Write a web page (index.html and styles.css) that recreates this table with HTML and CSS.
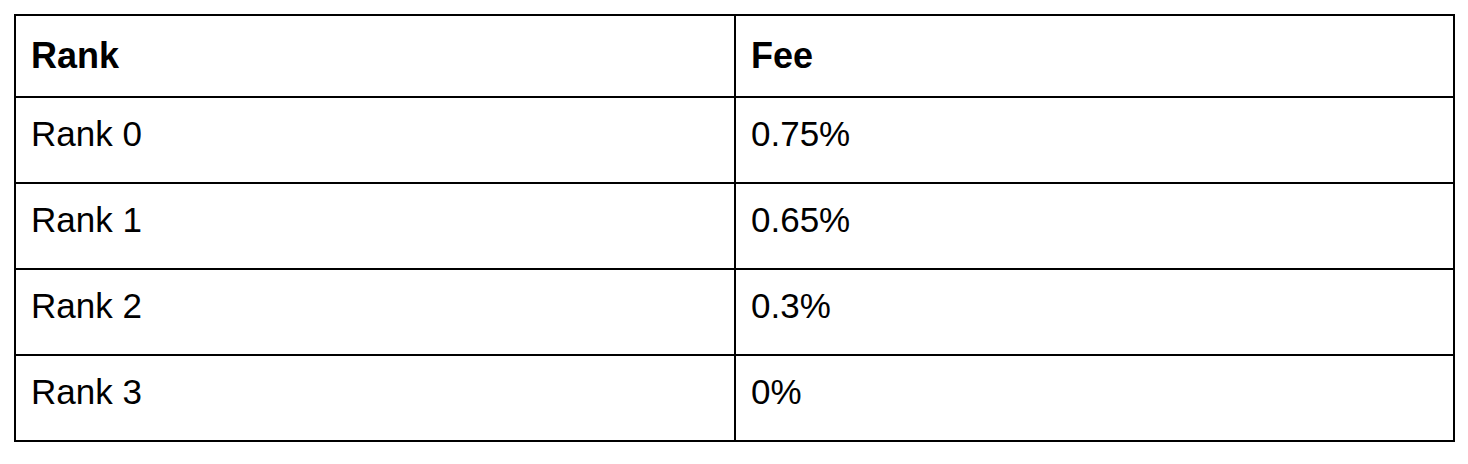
FILE: index.html
```html
<!DOCTYPE html>
<html>
<head>
<meta charset="utf-8">
<link rel="stylesheet" href="styles.css">
</head>
<body>
<div class="fee-table">
  <div class="cell head">Rank</div>
  <div class="cell head">Fee</div>
  <div class="cell">Rank 0</div>
  <div class="cell">0.75%</div>
  <div class="cell">Rank 1</div>
  <div class="cell">0.65%</div>
  <div class="cell">Rank 2</div>
  <div class="cell">0.3%</div>
  <div class="cell">Rank 3</div>
  <div class="cell">0%</div>
</div>
</body>
</html>
```
FILE: styles.css
```css
html, body {
  margin: 0;
  padding: 0;
  background: #fff;
}
body {
  padding: 14px;
  font-family: "Liberation Sans", Arial, sans-serif;
  color: #000;
}
.fee-table {
  display: grid;
  grid-template-columns: 720px 719px;
  grid-template-rows: 82px 86px 86px 86px 86px;
  border-left: 2px solid #000;
  border-top: 2px solid #000;
  width: 1439px;
}
.cell {
  border-right: 2px solid #000;
  border-bottom: 2px solid #000;
  padding: 18px 0 0 15px;
  font-size: 35px;
  line-height: 36px;
}
.cell.head {
  font-weight: bold;
  font-size: 36px;
  padding-top: 22px;
}
```
